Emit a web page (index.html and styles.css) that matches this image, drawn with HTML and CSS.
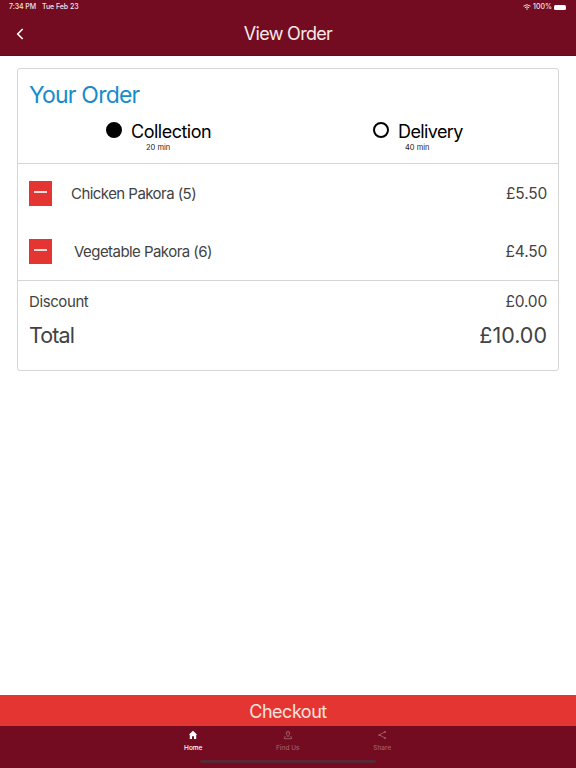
FILE: index.html
```html
<!DOCTYPE html>
<html lang="en">
<head>
<meta charset="utf-8">
<title>View Order</title>
<link rel="stylesheet" href="styles.css">
</head>
<body>
<header class="header">
  <div class="status">
    <span class="time">7:34 PM</span><span class="date">Tue Feb 23</span>
    <svg class="wifi" viewBox="0 0 8 6"><path d="M.5 2.200Q4-.8 7.500 2.200M1.900 3.700q2.100-1.700 4.200 0"/><path d="M4 6 2.900 4.800q1.100-.8 2.200 0z" class="solid"/></svg>
    <span class="percent">100%</span>
    <span class="battery"></span>
  </div>
  <div class="titlebar">
    <svg class="back" viewBox="0 0 8 12"><path d="M6.700 1 1.700 6l5 5"/></svg>
    <h1>View Order</h1>
  </div>
</header>
<main class="content">
  <section class="card">
    <div class="order-head">
      <h2>Your Order</h2>
      <div class="options">
        <div class="option collection"><i class="radio selected"></i><div><div class="name">Collection</div><div class="wait">20 min</div></div></div>
        <div class="option delivery"><i class="radio"></i><div><div class="name">Delivery</div><div class="wait">40 min</div></div></div>
      </div>
    </div>
    <div class="items">
      <div class="item"><button class="remove" aria-label="Remove"></button><span class="label chicken">Chicken Pakora (5)</span><span class="price">£5.50</span></div>
      <div class="item"><button class="remove" aria-label="Remove"></button><span class="label vegetable">Vegetable Pakora (6)</span><span class="price">£4.50</span></div>
    </div>
    <div class="summary">
      <div class="discount"><span>Discount</span><span class="price">£0.00</span></div>
      <div class="total"><span class="total-label">Total</span><span class="sum">£10.00</span></div>
    </div>
  </section>
</main>
<button class="checkout">Checkout</button>
<footer class="footer">
  <nav class="tabs">
    <a class="tab active"><svg viewBox="0 0 10 10"><path class="solid" d="M5 .8 9.200 4.700H8.200V9H6V6.200H4V9H1.800V4.700H.8z"/></svg><span>Home</span></a>
    <a class="tab find"><svg viewBox="0 0 10 10"><path d="M5 6.800C4.200 5.500 3.300 4.400 3.300 3a1.700 1.700 0 0 1 3.400 0c0 1.400-.9 2.500-1.700 3.800zM2.300 6 1.200 8.700h7.600L7.700 6"/><circle class="solid" cx="5" cy="3" r=".6"/></svg><span>Find Us</span></a>
    <a class="tab share"><svg viewBox="0 0 10 10"><path d="M8 1.800 2.300 4.900 8 8"/><circle class="solid" cx="8" cy="1.900" r="1"/><circle class="solid" cx="2.300" cy="4.900" r="1"/><circle class="solid" cx="8" cy="7.900" r="1"/></svg><span>Share</span></a>
  </nav>
  <div class="home-bar"></div>
</footer>
</body>
</html>
```
FILE: styles.css
```css
* { box-sizing: border-box; }
body {
  margin: 0;
  height: 768px;
  display: flex;
  flex-direction: column;
  overflow: hidden;
  background: #fff;
  color: #424242;
  font-family: Inter, "Liberation Sans", sans-serif;
}
h1, h2 { margin: 0; font-weight: 400; }
button { border: 0; padding: 0; font-family: inherit; }
svg { fill: none; stroke: currentColor; }
.solid { fill: currentColor; stroke: none; }

.header { height: 56px; flex: none; background: #730c20; color: #fff; border-bottom: 1px solid #650a1a; }
.status {
  height: 14px;
  padding: 0 10px 0 9px;
  display: flex;
  align-items: center;
  font-size: 7px;
  font-weight: 500;
  line-height: 14px;
  color: #f5e4e7;
}
.time { letter-spacing: -.1px; }
.date { margin-left: 6px; letter-spacing: -.05px; }
.wifi { width: 8px; height: 6px; margin-left: auto; }
.percent { margin-left: 2px; }
.battery { width: 12px; height: 5px; margin-left: 2px; border-radius: 1.5px; background: #fff; }
.titlebar { height: 40px; display: grid; grid-template-columns: 40px 1fr 40px; align-items: center; }
.back { width: 8px; height: 12px; margin-left: 16px; stroke-width: 1.6; }
h1 { font-size: 18px; line-height: 40px; text-align: center; letter-spacing: -.7px; color: #f9e8eb; }

.content { flex: 1; padding: 12px 17px; }
.card { height: 303px; border: 1px solid #d5d5d5; border-radius: 3px; }
.order-head { height: 95px; border-bottom: 1px solid #d5d5d5; padding: 11px 11px 0; }
h2 { font-size: 23px; line-height: 30px; letter-spacing: -.8px; color: #168ccc; }
.options { display: grid; grid-template-columns: 267px 1fr; padding-left: 77px; margin-top: 10px; color: #000; }
.option { display: flex; gap: 9px; }
.radio { width: 16px; height: 16px; margin-top: 2px; border: 2px solid #000; border-radius: 50%; }
.selected { background: #000; }
.name { font-size: 18px; line-height: 24px; letter-spacing: -.5px; }
.delivery .name { letter-spacing: -.6px; }
.wait { font-size: 7.500px; line-height: 8px; color: #222; }
.collection .wait { padding-left: 15px; }
.delivery .wait { padding-left: 7px; }

.items { height: 117px; border-bottom: 1px solid #d5d5d5; }
.item { height: 58px; padding: 0 11px; display: flex; align-items: center; font-size: 15px; }
.remove { width: 23px; height: 25px; background: #e53532; display: flex; align-items: center; justify-content: center; }
.remove::before { content: ""; width: 13px; height: 2px; margin-bottom: 2px; background: #f8dfda; }
.label { letter-spacing: -.55px; }
.chicken { margin-left: 19px; }
.vegetable { margin-left: 22px; }
.price { margin-left: auto; font-size: 15.500px; letter-spacing: -.2px; }
.summary { padding: 8px 11px 0; }
.discount, .total { display: flex; justify-content: space-between; }
.discount { font-size: 15px; line-height: 26px; letter-spacing: -.4px; }
.total { font-size: 21.500px; line-height: 40px; letter-spacing: 0; }
.total-label { letter-spacing: -.9px; }

.checkout { height: 31px; flex: none; background: #e53532; color: #f9e3de; font-size: 18px; line-height: 32px; letter-spacing: -.5px; padding-top: 1px; }
.footer { height: 42px; flex: none; background: #730c20; color: #a15e6b; }
.tabs { height: 34px; padding: 4px 146px 0; display: grid; grid-template-columns: repeat(3, 94.500px); }
.tab { display: flex; flex-direction: column; align-items: center; font-size: 6.500px; line-height: 8px; font-weight: 500; }
.tab svg { width: 10px; height: 10px; stroke-width: .9; margin-bottom: 4px; }
.active { color: #fff; }
.home-bar { width: 176px; height: 3px; margin: 0 auto; border-radius: 2px; background: #5a2834; }
```
